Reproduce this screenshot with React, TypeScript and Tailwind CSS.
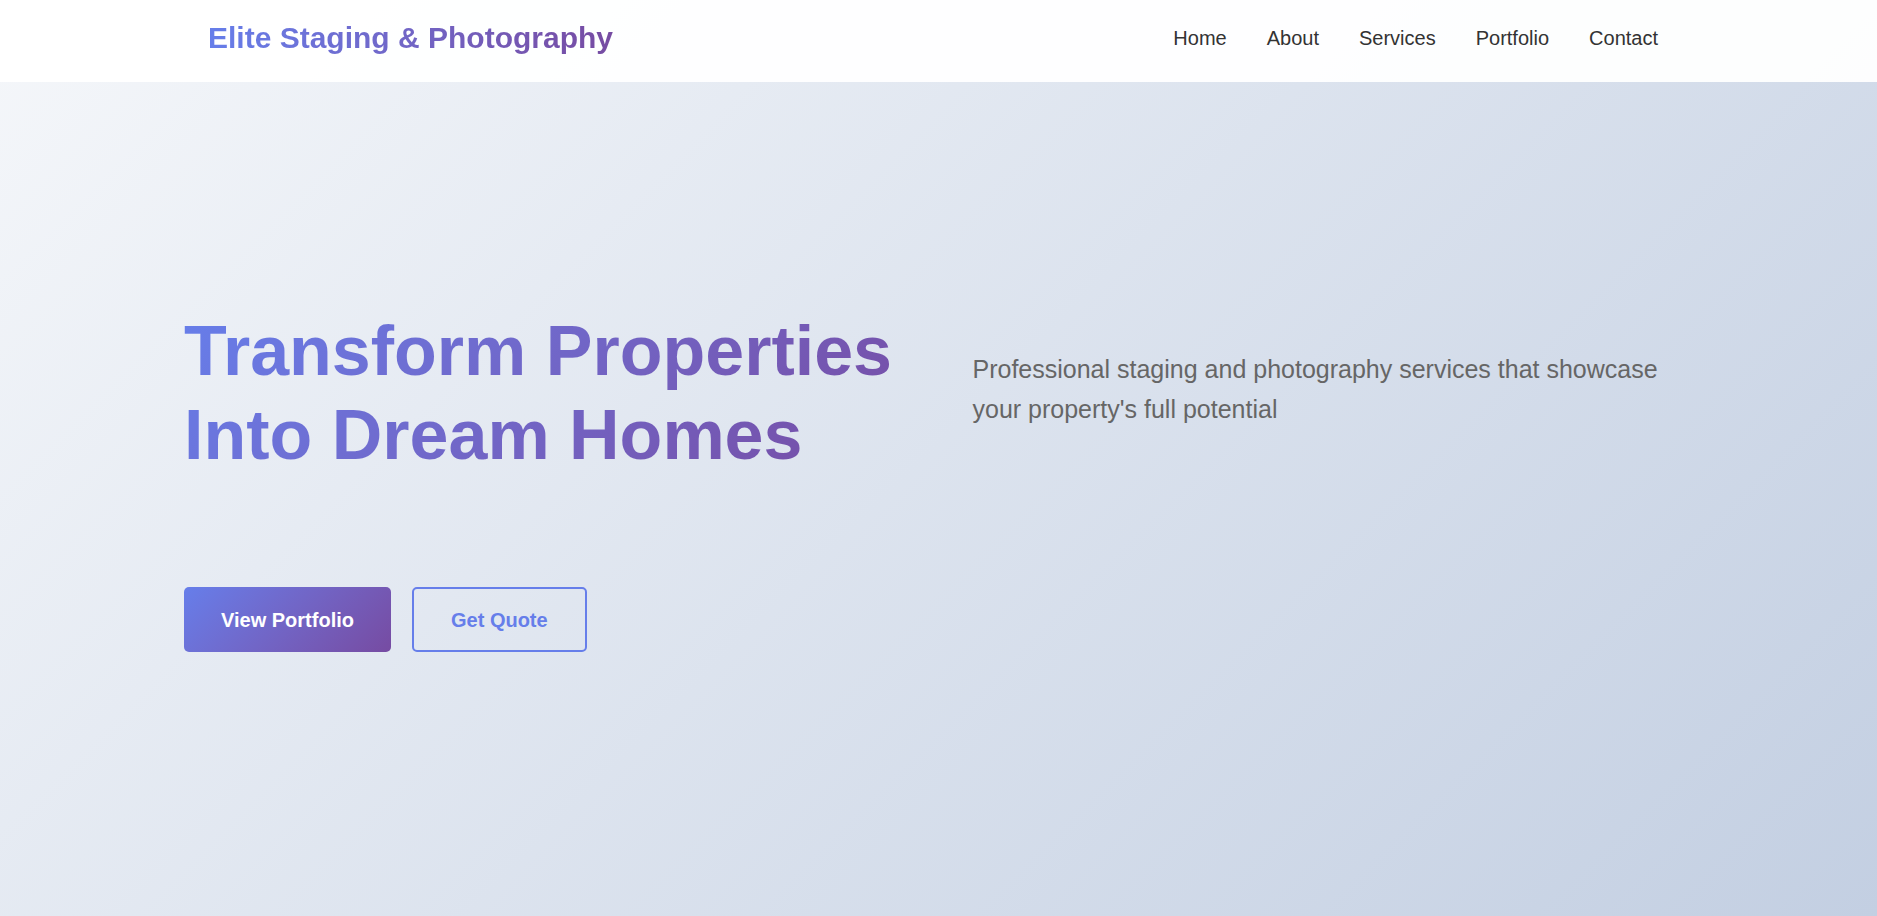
import React from "react";

const navLinks = ["Home", "About", "Services", "Portfolio", "Contact"];

const Header = () => {
  return (
    <header className="flex h-[82px] w-full items-center justify-between bg-white/95 pb-[7px] pl-[208px] pr-[219px]">
      <a
        href="#"
        className="bg-linear-to-r from-[#667eea] to-[#764ba2] bg-clip-text text-[30px] font-bold text-transparent">
        Elite Staging &amp; Photography
      </a>
      <nav className="flex items-center gap-[40px]">
        {navLinks.map((link) => (
          <a key={link} href="#" className="text-[20px] text-[#333]">
            {link}
          </a>
        ))}
      </nav>
    </header>
  );
};

const Hero = () => {
  return (
    <section className="px-[184px] pt-[227px]">
      <div className="grid grid-cols-2 items-start gap-[68px]">
        <h1 className="bg-linear-135 from-[#667eea] to-[#764ba2] bg-clip-text text-[70px] leading-[84px] font-bold text-transparent">
          Transform Properties
          <br />
          Into Dream Homes
        </h1>
        <p className="mt-[40px] text-[25px] leading-[40px] text-[#666]">
          Professional staging and photography services that showcase your
          property's full potential
        </p>
      </div>
      <div className="mt-[110px] flex gap-[21px]">
        <button className="h-[65px] rounded-[5px] bg-linear-135 from-[#667eea] to-[#764ba2] px-[37px] text-[20px] font-bold text-white">
          View Portfolio
        </button>
        <button className="h-[65px] rounded-[5px] border-2 border-[#667eea] px-[37px] text-[20px] font-bold text-[#667eea]">
          Get Quote
        </button>
      </div>
    </section>
  );
};

export default function App() {
  return (
    <div className="min-h-[916px] w-full bg-linear-135 from-[#f5f7fa] to-[#c3cfe2] font-['Liberation_Sans',Arial,sans-serif]">
      <Header />
      <Hero />
    </div>
  );
}
